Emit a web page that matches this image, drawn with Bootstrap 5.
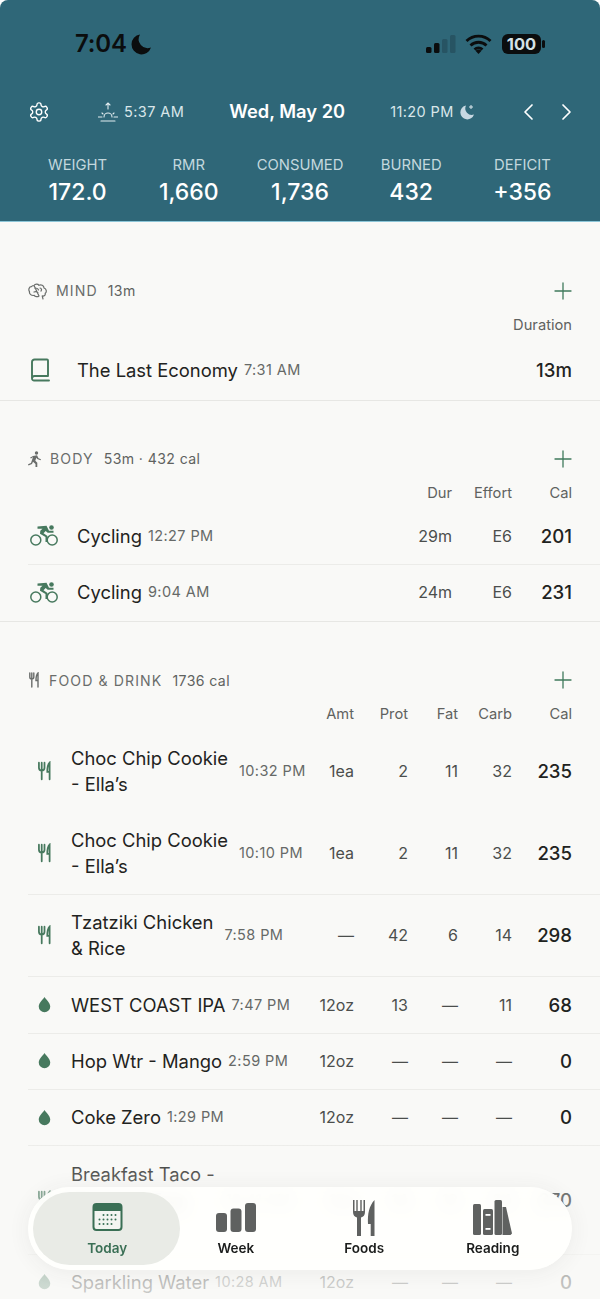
<!DOCTYPE html>
<html lang="en">
<head>
  <meta charset="UTF-8">
  <meta name="viewport" content="width=device-width, initial-scale=1.0">
  <title>Today</title>
  <link href="https://cdn.jsdelivr.net/npm/bootstrap@5.3.0/dist/css/bootstrap.min.css" rel="stylesheet">
  <style>
    html, body { height: 100%; overflow: hidden; background: #fff; }
    body { font-family: Inter, "Liberation Sans", sans-serif; color: #1f2321; }
    .app-frame { height: 1299px; position: relative; overflow: hidden; background: #f9f9f7; border-radius: 8px 8px 0 0; }

    .top-head { height: 222px; background: #2f6778; border-bottom: 1px solid #8cc6d8; color: #fff; }
    .status-line { height: 88px; padding: 0 54px 0 75px; color: #0b0d0e; }
    .clock { font-size: 24px; font-weight: 600; line-height: 1; letter-spacing: -.2px; }
    .date-line { height: 48px; padding: 0 27px 0 28px; }
    .sun-time { font-size: 14.5px; color: #d9e6ea; letter-spacing: .4px; white-space: nowrap; }
    .date-title { font-size: 18.3px; font-weight: 600; width: 140px; text-align: center; white-space: nowrap; margin-left: 33px; }
    .moon-time { margin-left: 33px; }
    .stat-strip { padding: 0 22px; margin-top: 19px; }
    .stat-box { flex: 1 1 0; text-align: center; }
    .stat-label { font-size: 14.8px; line-height: 20px; color: #c3d8de; }
    .stat-value { font-size: 23px; font-weight: 500; line-height: 30px; margin-top: 2px; }

    .log-part { padding-top: 46px; border-bottom: 1px solid #e7e7e4; }
    .log-part.first-part { padding-top: 57px; }
    .log-part.body-part { padding-bottom: 1.3px; }
    .part-head { height: 24px; padding: 0 28px; font-size: 14.1px; color: #6a6d6b; }
    .part-name { letter-spacing: 1.1px; margin-right: 10px; }
    .part-sum { letter-spacing: .4px; color: #5f6260; }
    .add-mark { margin-left: auto; }
    .col-labels { height: 20px; margin-top: 12px; padding: 0 28px; font-size: 14.7px; color: #5f6260; }
    .log-row { padding: 14.3px 28px 15px 0; margin-left: 28px; border-top: 1px solid #ecece9; line-height: 26px; }
    .log-row.no-line { border-top-color: transparent; }
    .log-row.mind-row { padding-top: 16px; padding-bottom: 17px; }
    .log-row.body-row { padding-top: 14.6px; }
    .first-row { margin-top: 5px; }
    .first-row.body-row { margin-top: 4px; }
    .col-labels .col-fill, .log-row .col-fill { flex: 1 1 auto; min-width: 0; }
    .ico-wide { width: 49px; flex: none; padding-left: 2px; }
    .ico-slim { width: 43px; flex: none; padding-left: 10px; }
    .item-name { font-size: 18.4px; white-space: nowrap; }
    .item-time { font-size: 14.5px; color: #666967; letter-spacing: .4px; white-space: nowrap; margin-left: 6px; }
    .item-name.wrapped + .item-time { margin-left: 11px; }
    .num { flex: none; text-align: right; font-size: 16px; color: #4b4e4c; white-space: nowrap; }
    .col-labels .num { font-size: 14.7px; color: #5f6260; }
    .w-50px { width: 50px; }
    .w-54px { width: 54px; }
    .w-60px { width: 60px; }
    .num.cal-num { font-size: 18.6px; font-weight: 500; color: #1f2321; }
    .col-labels .num.cal-num { font-size: 14.7px; font-weight: 400; color: #5f6260; }

    .fade-cover { position: absolute; left: 0; right: 0; bottom: 0; height: 160px; pointer-events: none;
      background: linear-gradient(to bottom, rgba(249,249,247,0), rgba(249,249,247,.35) 30%, rgba(249,249,247,.8) 100%); }
    .tab-dock { position: absolute; left: 28px; right: 28px; top: 1187px; height: 83px; padding: 0 15px;
      border-radius: 42px; background: rgba(255,255,253,.9); backdrop-filter: blur(7px);
      box-shadow: 0 2px 22px rgba(60,60,50,.07); display: grid; grid-template-columns: repeat(4, 128.5px); }
    .tab-item { position: relative; text-align: center; padding-top: 11px; font-size: 13.5px; font-weight: 600; color: #1b1d1c; line-height: 18px; }
    .tab-item.on { color: #3a6f55; }
    .tab-item.on::before { content: ""; position: absolute; left: -10px; right: -8px; top: 5px; bottom: 5px; border-radius: 37px; background: #e9ebe6; }
    .tab-item > * { position: relative; }
    .tab-pic { height: 38px; margin-bottom: 3px; }
  </style>
</head>
<body>
  <div class="app-frame">
    <header class="top-head">
      <div class="status-line d-flex align-items-center">
        <span class="clock">7:04</span>
        <svg width="26" height="26" viewBox="0 0 26 26"><path d="M13 3.5A10 10 0 1 0 24 16.5 9 9 0 0 1 13 3.5z" fill="#0b0d0e"/></svg>
        <svg class="ms-auto" width="30" height="20" viewBox="0 0 30 20"><rect x="0" y="13" width="5.500" height="6" rx="1.500" fill="#0b0d0e"/><rect x="8" y="9" width="5.500" height="10" rx="1.500" fill="#0b0d0e"/><rect x="16" y="5" width="5.500" height="14" rx="1.500" fill="#275463"/><rect x="24" y="1" width="5.500" height="18" rx="1.500" fill="#275463"/></svg>
        <svg width="27" height="20" viewBox="0 0 26 20" style="margin-left:9px"><path d="M1 7a17 17 0 0 1 24 0M5 11.500a11.500 11.500 0 0 1 16 0M9 15.500a6 6 0 0 1 8 0" fill="none" stroke="#0b0d0e" stroke-width="2.800"/><path d="M13 20l-3-3.200a4.400 4.400 0 0 1 6 0z" fill="#0b0d0e"/></svg>
        <svg width="44" height="20" viewBox="0 0 44 20" style="margin-left:10px"><rect x="0" y="0" width="39" height="20" rx="6" fill="#0b0d0e"/><rect x="40" y="6" width="3" height="8" rx="1.500" fill="#0b0d0e"/><text x="19.500" y="16" text-anchor="middle" font-family="Inter" font-size="16.500" font-weight="700" fill="#d5e2e6">100</text></svg>
      </div>
      <div class="date-line d-flex align-items-center">
        <svg width="22" height="22" viewBox="0 0 24 24" fill="none" stroke="#fff" stroke-width="1.500" stroke-linecap="round" stroke-linejoin="round"><path d="M12.220 2h-.44a2 2 0 0 0-2 2v.18a2 2 0 0 1-1 1.730l-.43.25a2 2 0 0 1-2 0l-.15-.08a2 2 0 0 0-2.730.73l-.22.38a2 2 0 0 0 .73 2.730l.15.1a2 2 0 0 1 1 1.720v.51a2 2 0 0 1-1 1.740l-.15.09a2 2 0 0 0-.73 2.730l.22.38a2 2 0 0 0 2.730.73l.15-.08a2 2 0 0 1 2 0l.43.25a2 2 0 0 1 1 1.730V20a2 2 0 0 0 2 2h.44a2 2 0 0 0 2-2v-.18a2 2 0 0 1 1-1.730l.43-.25a2 2 0 0 1 2 0l.15.08a2 2 0 0 0 2.730-.73l.22-.39a2 2 0 0 0-.73-2.730l-.15-.08a2 2 0 0 1-1-1.740v-.5a2 2 0 0 1 1-1.740l.15-.09a2 2 0 0 0 .73-2.730l-.22-.38a2 2 0 0 0-2.730-.73l-.15.08a2 2 0 0 1-2 0l-.43-.25a2 2 0 0 1-1-1.730V4a2 2 0 0 0-2-2z"/><circle cx="12" cy="12" r="3"/></svg>
        <svg width="20" height="20" viewBox="0 0 20 20" fill="none" stroke="#e2edf0" stroke-width="1.100" stroke-linecap="round" style="margin-left:48px"><path d="M10 7V1M8 3l2-2 2 2M6 15a4 4 0 0 1 8 0M0 15h4M16 15h4M3 19h14M4 11l1 1M16 11l-1 1"/></svg>
        <span class="sun-time" style="margin-left:6px">5:37 AM</span>
        <span class="date-title">Wed, May 20</span>
        <span class="sun-time moon-time">11:20 PM</span>
        <svg width="18" height="18" viewBox="0 0 18 18" class="ms-1"><path d="M8 2.500a7 7 0 1 0 8 9A6.500 6.500 0 0 1 8 2.500z" fill="#c8d8e2"/><path d="M13 2v4M11 4h4" stroke="#dbe7ec" stroke-width="1"/></svg>
        <svg class="ms-auto" width="12" height="20" viewBox="0 0 12 20" fill="none" stroke="#fff" stroke-width="1.700" stroke-linecap="round" stroke-linejoin="round"><path d="M10 3L3 10l7 7"/></svg>
        <svg width="12" height="20" viewBox="0 0 12 20" fill="none" stroke="#fff" stroke-width="1.700" stroke-linecap="round" stroke-linejoin="round" style="margin-left:27px"><path d="M2 3l7 7-7 7"/></svg>
      </div>
      <div class="stat-strip d-flex">
        <div class="stat-box"><div class="stat-label">WEIGHT</div><div class="stat-value">172.0</div></div>
        <div class="stat-box"><div class="stat-label">RMR</div><div class="stat-value">1,660</div></div>
        <div class="stat-box"><div class="stat-label">CONSUMED</div><div class="stat-value">1,736</div></div>
        <div class="stat-box"><div class="stat-label">BURNED</div><div class="stat-value">432</div></div>
        <div class="stat-box"><div class="stat-label">DEFICIT</div><div class="stat-value">+356</div></div>
      </div>
    </header>

    <main>
      <section class="log-part first-part">
        <div class="part-head d-flex align-items-center">
          <svg width="20" height="17" viewBox="0 0 20 17" fill="none" stroke="#6a6d6b" stroke-width="1.200" stroke-linecap="round" stroke-linejoin="round" class="me-2"><path d="M6 2.500C7 .8 10 .8 11 2.300 13 1.200 16 2.600 16 5c2.500.6 3 4 1.200 5.300.4 2-1.200 3.200-3 2.600L15 16M11 13c-1.500 1.200-4 .8-4.800-.6C3.500 13 1 11 1.500 8.500.2 7 1 3.600 3.400 3.600 4 3 5 2.400 6 2.500zM7 5.500c1.500-.5 3 0 3.500 1.500M12 5c1.500.2 2 2 1 3M6 9c1.500-.8 3-.5 4 .8"/></svg>
          <span class="part-name">MIND</span><span class="part-sum">13m</span>
          <svg class="add-mark" width="18" height="18" viewBox="0 0 18 18" stroke="#3f7a5c" stroke-width="1.300" stroke-linecap="round"><path d="M9 1v16M1 9h16"/></svg>
        </div>
        <div class="col-labels d-flex align-items-center"><div class="col-fill"></div><div class="num">Duration</div></div>
        <div class="log-row mind-row no-line first-row d-flex align-items-center">
          <div class="ico-wide d-flex"><svg width="20" height="24" viewBox="0 0 20 24" fill="none" stroke="#47795e" stroke-width="1.900" stroke-linecap="round" stroke-linejoin="round"><path d="M2 20V4a2.500 2.500 0 0 1 2.500-2.500H17a1 1 0 0 1 1 1V18H4.500A2.500 2.500 0 0 0 2 20.500 2 2 0 0 0 4.500 22.500H19"/></svg></div>
          <div class="col-fill d-flex align-items-center"><span class="item-name">The Last Economy</span><span class="item-time">7:31 AM</span></div>
          <div class="num cal-num">13m</div>
        </div>
      </section>

      <section class="log-part body-part">
        <div class="part-head d-flex align-items-center">
          <svg width="14" height="16" viewBox="0 0 14 16" fill="#6a6d6b" class="me-2"><circle cx="8.500" cy="2" r="1.700"/><path d="M5 5l4-.8 1.500 3 2.500 1-.5 1-3.200-1.200-1-1.300-1 3 2 2V16H7.500v-3L5 10.800 4 13l-3.500 1.500L0 13.300 3 12l2-6-2 1.500-1-.8z"/></svg>
          <span class="part-name">BODY</span><span class="part-sum">53m · 432 cal</span>
          <svg class="add-mark" width="18" height="18" viewBox="0 0 18 18" stroke="#3f7a5c" stroke-width="1.300" stroke-linecap="round"><path d="M9 1v16M1 9h16"/></svg>
        </div>
        <div class="col-labels d-flex align-items-center"><div class="col-fill"></div><div class="num w-60px">Dur</div><div class="num w-60px">Effort</div><div class="num w-60px cal-num">Cal</div></div>
        <div class="log-row body-row no-line first-row d-flex align-items-center">
          <div class="ico-wide d-flex"><svg width="28" height="21" viewBox="0 0 28 21"><g fill="none" stroke="#47795e" stroke-width="1.500"><circle cx="5.800" cy="15" r="5"/><circle cx="22.200" cy="15" r="5"/></g><circle cx="21.500" cy="2.500" r="2.300" fill="#47795e"/><path d="M7.500 1.500L16.500 .8l2.500 5h4.500v2h-5.800L15.700 6 13.500 8.200l4 2.800v6h-2v-5l-5.500-3.300.3-3 2.200-2H7.500z" fill="#47795e"/></svg></div>
          <div class="col-fill d-flex align-items-center"><span class="item-name">Cycling</span><span class="item-time">12:27 PM</span></div>
          <div class="num w-60px">29m</div><div class="num w-60px">E6</div><div class="num w-60px cal-num">201</div>
        </div>
        <div class="log-row body-row d-flex align-items-center">
          <div class="ico-wide d-flex"><svg width="28" height="21" viewBox="0 0 28 21"><g fill="none" stroke="#47795e" stroke-width="1.500"><circle cx="5.800" cy="15" r="5"/><circle cx="22.200" cy="15" r="5"/></g><circle cx="21.500" cy="2.500" r="2.300" fill="#47795e"/><path d="M7.500 1.500L16.500 .8l2.500 5h4.500v2h-5.800L15.700 6 13.500 8.200l4 2.800v6h-2v-5l-5.500-3.300.3-3 2.200-2H7.500z" fill="#47795e"/></svg></div>
          <div class="col-fill d-flex align-items-center"><span class="item-name">Cycling</span><span class="item-time">9:04 AM</span></div>
          <div class="num w-60px">24m</div><div class="num w-60px">E6</div><div class="num w-60px cal-num">231</div>
        </div>
      </section>

      <section class="log-part" id="foodPart">
        <div class="part-head d-flex align-items-center">
          <svg width="13" height="16" viewBox="-1 0 13 16" fill="none" stroke="#6a6d6b" stroke-width="1.400" stroke-linecap="round" class="me-2"><path d="M.8 1v4c0 1.500 1 2 2 2s2-.500 2-2V1M2.800 1v14M9 15V1C7.500 2.500 7 5 7 8.500h2"/></svg>
          <span class="part-name">FOOD &amp; DRINK</span><span class="part-sum">1736 cal</span>
          <svg class="add-mark" width="18" height="18" viewBox="0 0 18 18" stroke="#3f7a5c" stroke-width="1.300" stroke-linecap="round"><path d="M9 1v16M1 9h16"/></svg>
        </div>
        <div class="col-labels d-flex align-items-center"><div class="col-fill"></div><div class="num w-50px">Amt</div><div class="num w-54px">Prot</div><div class="num w-50px">Fat</div><div class="num w-54px">Carb</div><div class="num w-60px cal-num">Cal</div></div>
        <div id="foodRows"></div>
      </section>
    </main>

    <div class="fade-cover"></div>

    <nav class="tab-dock">
      <div class="tab-item on">
        <div class="tab-pic d-flex align-items-center justify-content-center"><svg width="31" height="28" viewBox="0 0 30 28"><rect x="1" y="1" width="28" height="26" rx="3" fill="#f3f5f1" stroke="#3a6f55" stroke-width="2"/><path d="M1 8V4a3 3 0 0 1 3-3h22a3 3 0 0 1 3 3v4z" fill="#3a6f55"/><g fill="#3a6f55"><circle cx="11" cy="12" r="1"/><circle cx="15" cy="12" r="1"/><circle cx="19" cy="12" r="1"/><circle cx="23" cy="12" r="1"/><circle cx="7" cy="16.500" r="1"/><circle cx="11" cy="16.500" r="1"/><circle cx="15" cy="16.500" r="1"/><circle cx="19" cy="16.500" r="1"/><circle cx="23" cy="16.500" r="1"/><circle cx="7" cy="21" r="1"/><circle cx="11" cy="21" r="1"/><circle cx="15" cy="21" r="1"/><circle cx="19" cy="21" r="1"/></g></svg></div>
        <span>Today</span>
      </div>
      <div class="tab-item">
        <div class="tab-pic d-flex align-items-center justify-content-center"><svg width="40" height="29" viewBox="0 0 40 29" fill="#5f6160"><rect x="0" y="10" width="11" height="19" rx="3"/><rect x="14.500" y="5.500" width="11" height="23.500" rx="3"/><rect x="29" y="0" width="11" height="29" rx="3"/></svg></div>
        <span>Week</span>
      </div>
      <div class="tab-item">
        <div class="tab-pic d-flex align-items-center justify-content-center"><svg width="22" height="37" viewBox="0 0 22 37" fill="#5f6160"><path d="M0 1v12c0 3 1.500 5 4 5.500V37h4V18.500c2.500-.500 4-2.500 4-5.500V1h-1.500v11H8.700V1H7.300v11H4.700V1H3.300v11H1.500V1z"/><path d="M21.500 1v36h-3.800V25H15c-.5-10 1-18 6.500-24z"/></svg></div>
        <span>Foods</span>
      </div>
      <div class="tab-item">
        <div class="tab-pic d-flex align-items-center justify-content-center"><svg width="39" height="35" viewBox="0 0 39 35" fill="#5f6160"><rect x="0" y="4" width="8" height="31" rx="1.500"/><rect x="10" y="9" width="10" height="26" rx="1.500"/><rect x="21.500" y="0" width="7.500" height="35" rx="1.500"/><path d="M29.500 7h3.500L39 33.500 37.500 35h-8z"/><rect x="12.500" y="14" width="5" height="1.800" fill="#fff"/><rect x="12.500" y="28" width="5" height="1.800" fill="#fff"/></svg></div>
        <span>Reading</span>
      </div>
    </nav>
  </div>

  <script>
    // food log rows
    const fork = '<svg width="13" height="20" viewBox="0 0 14 20" fill="none" stroke="#47795e" stroke-width="1.900" stroke-linecap="round"><path d="M1 1v5.500C1 8.500 2.300 9.500 4 9.500s3-1 3-3V1M4 1v18M12.500 19V1C10.500 3 10 6.500 10 11h2.500"/></svg>';
    const drop = '<svg width="13" height="17" viewBox="0 0 14 17"><path d="M7 .5C5.500 3 .8 7 .8 10.700a6.200 6.200 0 0 0 12.400 0C13.200 7 8.500 3 7 .5z" fill="#47795e"/></svg>';
    const rows = [
      [fork, 'Choc Chip Cookie<br>- Ella\u2019s', '10:32 PM', '1ea', '2', '11', '32', '235'],
      [fork, 'Choc Chip Cookie<br>- Ella\u2019s', '10:10 PM', '1ea', '2', '11', '32', '235'],
      [fork, 'Tzatziki Chicken<br>&amp; Rice', '7:58 PM', '\u2014', '42', '6', '14', '298'],
      [drop, 'WEST COAST IPA', '7:47 PM', '12oz', '13', '\u2014', '11', '68'],
      [drop, 'Hop Wtr - Mango', '2:59 PM', '12oz', '\u2014', '\u2014', '\u2014', '0'],
      [drop, 'Coke Zero', '1:29 PM', '12oz', '\u2014', '\u2014', '\u2014', '0'],
      [fork, 'Breakfast Taco -<br>Sausage Egg<br>Cheese', '10:41 AM', '1ea', '14', '12', '24', '270'],
      [drop, 'Sparkling Water', '10:28 AM', '12oz', '\u2014', '\u2014', '\u2014', '0']
    ];
    document.querySelector('#foodRows').innerHTML = rows.map((r, i) => `
      <div class="log-row d-flex align-items-center${i < 2 ? ' no-line' : ''}${i === 0 ? ' first-row' : ''}">
        <div class="ico-slim d-flex">${r[0]}</div>
        <div class="col-fill d-flex align-items-center"><span class="item-name${r[1].includes('<br>') ? ' wrapped' : ''}">${r[1]}</span><span class="item-time">${r[2]}</span></div>
        <div class="num w-50px">${r[3]}</div><div class="num w-54px">${r[4]}</div><div class="num w-50px">${r[5]}</div><div class="num w-54px">${r[6]}</div><div class="num w-60px cal-num">${r[7]}</div>
      </div>`).join('');
  </script>
  <script src="https://cdn.jsdelivr.net/npm/bootstrap@5.3.0/dist/js/bootstrap.bundle.min.js"></script>
</body>
</html>
